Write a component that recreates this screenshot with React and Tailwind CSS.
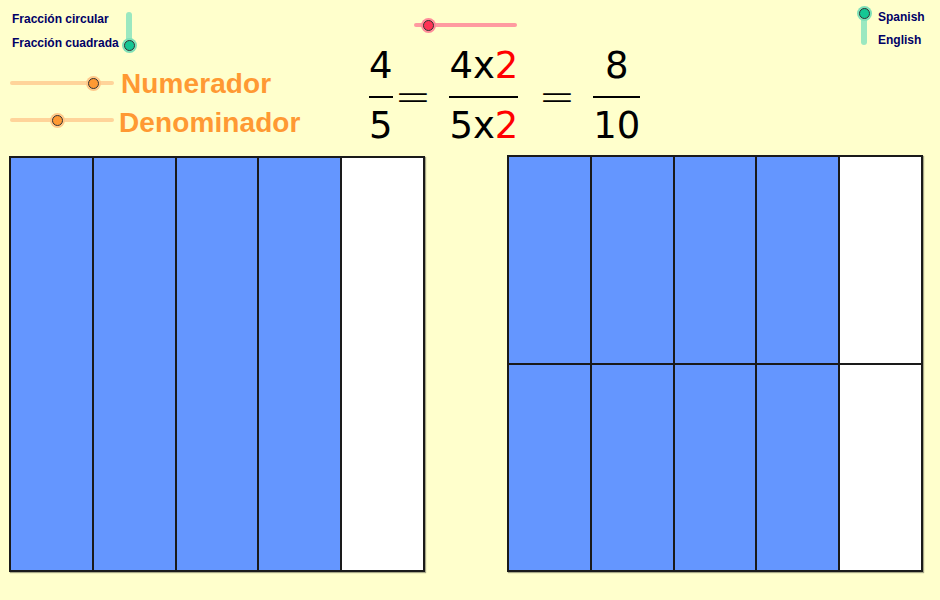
import React from "react";

function Knob({ fill, halo }) {
  return (
    <div className={`w-[15px] h-[15px] rounded-full flex items-center justify-center ${halo}`}>
      <div className={`w-[11px] h-[11px] rounded-full border border-[#333] ${fill}`} />
    </div>
  );
}

function HSlider({ width, knobLeft, track, fill, halo }) {
  return (
    <div className="relative h-[30px]" style={{ width }}>
      <div className={`absolute left-0 right-0 top-[13px] h-[4px] rounded-full ${track}`} />
      <div className="absolute top-[7.5px]" style={{ left: knobLeft }}>
        <Knob fill={fill} halo={halo} />
      </div>
    </div>
  );
}

function Frac({ num, den }) {
  return (
    <div className="flex flex-col items-center">
      <div className="leading-[38px] mb-[11px]">{num}</div>
      <div className="h-[2px] w-full bg-black" />
      <div className="leading-[38px] mt-[9px]">{den}</div>
    </div>
  );
}

function Eq() {
  return <div className="leading-[38px] mt-[31px] text-[44px] font-extralight">=</div>;
}

function Cell({ filled }) {
  return <div className={filled ? "bg-[#6496ff]" : "bg-white"} />;
}

export default function App() {
  const sans = { fontFamily: '"Liberation Sans", Arial, sans-serif' };
  const math = { fontFamily: '"DejaVu Sans", sans-serif' };
  return (
    <div className="w-[940px] h-[600px] bg-[#ffffcc] overflow-hidden" style={sans}>
      {/* header */}
      <div className="h-[155px] flex">
        {/* left controls */}
        <div className="w-[369px] shrink-0 flex flex-col">
          <div className="flex h-[52px]">
            <div className="w-[122px] pl-[12px] pt-[11px] flex flex-col gap-[8px] text-[12px] leading-[16px] font-bold text-[#000066] whitespace-nowrap">
              <div>Fracción circular</div>
              <div>Fracción cuadrada</div>
            </div>
            <div className="relative w-[14px] h-[52px]">
              <div className="absolute left-[4px] top-[12px] w-[6px] h-[33px] rounded-full bg-[#9be8c0]" />
              <div className="absolute left-[-0.5px] top-[37.5px]">
                <Knob fill="bg-[#14c794]" halo="bg-[#7fe0b8]" />
              </div>
            </div>
          </div>
          <div className="mt-[16px] flex items-center h-[30px] pl-[10px]">
            <HSlider width={104} knobLeft={75.5} track="bg-[#ffd49a]" fill="bg-[#ff9933]" halo="bg-[#ffc98a]" />
            <div className="ml-[7px] mt-[1px] text-[28px] tracking-[0.1px] font-bold text-[#ff9933] leading-[30px]">Numerador</div>
          </div>
          <div className="mt-[7px] flex items-center h-[30px] pl-[10px]">
            <HSlider width={104} knobLeft={39.5} track="bg-[#ffd49a]" fill="bg-[#ff9933]" halo="bg-[#ffc98a]" />
            <div className="ml-[5px] mt-[5px] text-[28px] tracking-[0.1px] font-bold text-[#ff9933] leading-[30px]">Denominador</div>
          </div>
        </div>

        {/* middle math */}
        <div className="w-[489px] shrink-0 flex flex-col">
          <div className="ml-[45px] mt-[10px]">
            <HSlider width={103} knobLeft={6.5} track="bg-[#ff9aa0]" fill="bg-[#ff3355]" halo="bg-[#ff8c99]" />
          </div>
          <div className="mt-[7px] flex items-start text-[37px] text-black" style={math}>
            <Frac num="4" den="5" />
            <div className="ml-[2px]"><Eq /></div>
            <div className="ml-[18px]">
              <Frac
                num={<span>4x<span className="text-[#ff0000]">2</span></span>}
                den={<span>5x<span className="text-[#ff0000]">2</span></span>}
              />
            </div>
            <div className="ml-[20px]"><Eq /></div>
            <div className="ml-[18px]">
              <Frac num="8" den="10" />
            </div>
          </div>
        </div>

        {/* language */}
        <div className="flex">
          <div className="relative w-[12px] h-[50px]">
            <div className="absolute left-[3px] top-[13px] w-[6px] h-[32px] rounded-full bg-[#9be8c0]" />
            <div className="absolute left-[-1.5px] top-[5.5px]">
              <Knob fill="bg-[#14c794]" halo="bg-[#7fe0b8]" />
            </div>
          </div>
          <div className="ml-[8px] pt-[9px] flex flex-col gap-[7px] text-[12px] leading-[16px] font-bold text-[#000066]">
            <div>Spanish</div>
            <div>English</div>
          </div>
        </div>
      </div>

      {/* rectangles */}
      <div className="flex pl-[9px] gap-[82px]">
        <div className="mt-[1px] w-[416px] h-[416px] bg-[#1a1a1a] p-[2px] gap-[2px] grid grid-cols-5 shadow-[1px_1px_1px_rgba(0,0,0,0.35)]">
          <Cell filled />
          <Cell filled />
          <Cell filled />
          <Cell filled />
          <Cell />
        </div>
        <div className="w-[416px] h-[417px] bg-[#1a1a1a] p-[2px] gap-[2px] grid grid-cols-5 grid-rows-2 shadow-[1px_1px_1px_rgba(0,0,0,0.35)]">
          <Cell filled />
          <Cell filled />
          <Cell filled />
          <Cell filled />
          <Cell />
          <Cell filled />
          <Cell filled />
          <Cell filled />
          <Cell filled />
          <Cell />
        </div>
      </div>
    </div>
  );
}
